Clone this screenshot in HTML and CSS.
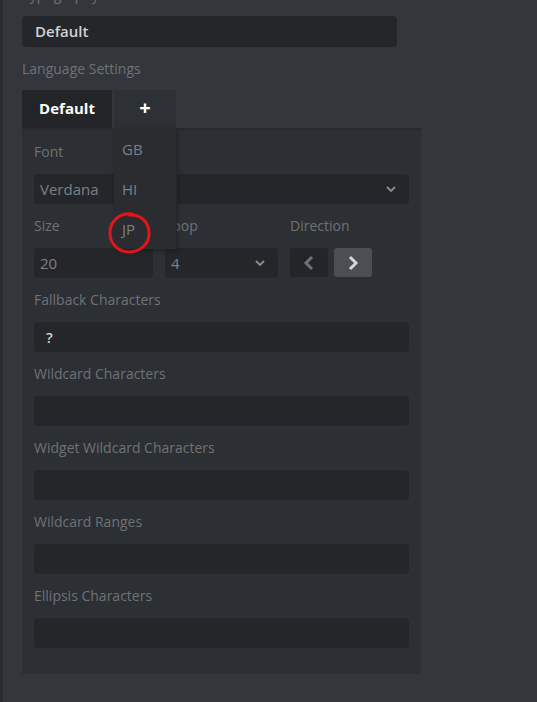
FILE: index.html
```html
<!DOCTYPE html>
<html lang="en">
<head>
  <meta charset="UTF-8" />
  <title>Language Settings</title>
  <link rel="stylesheet" href="styles.css">
</head>
<body>
  <div class="page">
    <div class="label top-label">Typography</div>
    <div class="input strong">Default</div>

    <div class="label section-label">Language Settings</div>

    <div class="tabs">
      <div class="tab active">Default</div>
      <div class="tab add">+
        <div class="menu">
          <div class="menu-item">GB</div>
          <div class="menu-item">HI</div>
          <div class="menu-item">JP</div>
        </div>
        <svg class="mark" width="50" height="46" viewBox="0 0 50 46">
          <path d="M27 4 C16 2 6 10 5 21 C4 33 13 42 24 42 C35 42 45 34 44 22 C43 11 35 4 24 5" fill="none" stroke="#e0161b" stroke-width="3" stroke-linecap="round"/>
        </svg>
      </div>
    </div>

    <div class="panel">
      <div class="field">
        <div class="label">Font</div>
        <div class="input select">Verdana
          <svg class="chev" width="10" height="6" viewBox="0 0 10 6"><path d="M1 1 L5 5 L9 1" fill="none" stroke="#8a8f94" stroke-width="1.8"/></svg>
        </div>
      </div>

      <div class="row">
        <div class="field">
          <div class="label">Size</div>
          <div class="input">20</div>
        </div>
        <div class="field">
          <div class="label">Loop</div>
          <div class="input select">4
            <svg class="chev" width="10" height="6" viewBox="0 0 10 6"><path d="M1 1 L5 5 L9 1" fill="none" stroke="#8a8f94" stroke-width="1.8"/></svg>
          </div>
        </div>
        <div class="field">
          <div class="label">Direction</div>
          <div class="dir">
            <div class="dir-btn">
              <svg width="12" height="16" viewBox="0 0 12 16"><path d="M9 2 L3 8 L9 14" fill="none" stroke="#6d7176" stroke-width="3"/></svg>
            </div>
            <div class="dir-btn on">
              <svg width="12" height="16" viewBox="0 0 12 16"><path d="M3 2 L9 8 L3 14" fill="none" stroke="#d4d7da" stroke-width="3"/></svg>
            </div>
          </div>
        </div>
      </div>

      <div class="field">
        <div class="label">Fallback Characters</div>
        <div class="input value">?</div>
      </div>
      <div class="field">
        <div class="label">Wildcard Characters</div>
        <div class="input"></div>
      </div>
      <div class="field">
        <div class="label">Widget Wildcard Characters</div>
        <div class="input"></div>
      </div>
      <div class="field">
        <div class="label">Wildcard Ranges</div>
        <div class="input"></div>
      </div>
      <div class="field">
        <div class="label">Ellipsis Characters</div>
        <div class="input"></div>
      </div>
    </div>
  </div>
</body>
</html>
```

FILE: styles.css
```css
body {
  margin: 0;
  font-family: 'Open Sans', 'Noto Sans', sans-serif;
  font-size: 14px;
  background-color: #33363a;
  border-left: 3px solid #2a2c30;
  height: 702px;
  overflow: hidden;
}
.page {
  padding: 0 19px;
}
.label {
  color: #6e7378;
  line-height: 20px;
  height: 20px;
}
.top-label {
  margin-top: -15px;
  margin-bottom: 11px;
}
.section-label {
  margin-top: 12px;
  margin-bottom: 11px;
}
.input {
  position: relative;
  box-sizing: border-box;
  height: 30px;
  line-height: 30px;
  padding: 0 6px;
  background: #242629;
  border-radius: 4px;
  color: #7c8186;
  font-size: 15px;
}
.input.strong {
  width: 375px;
  height: 31px;
  line-height: 31px;
  padding: 0 13px;
  color: #cfd2d6;
  font-weight: 600;
}
.input.value {
  color: #cfd2d6;
  font-weight: 600;
  padding: 0 12px;
}
.select .chev {
  position: absolute;
  right: 13px;
  top: 12px;
}
.tabs {
  display: flex;
  gap: 2px;
  height: 38px;
}
.tab {
  width: 90px;
  text-align: center;
  line-height: 36px;
  color: #ffffff;
  font-weight: 700;
  font-size: 15px;
}
.tab.active {
  background: #222427;
}
.tab.add {
  position: relative;
  width: 62px;
  background: #2d3034;
  font-size: 20px;
}
.menu {
  position: absolute;
  top: 38px;
  left: 0;
  width: 62px;
  padding-top: 1px;
  background: #2a2c30;
  border-right: 1px solid #25272a;
  box-shadow: 1px 2px 4px rgba(0, 0, 0, 0.25);
  z-index: 2;
}
.menu-item {
  height: 40px;
  line-height: 40px;
  padding-left: 8px;
  text-align: left;
  color: #7b8085;
  font-weight: 400;
  font-size: 15px;
}
.mark {
  position: absolute;
  top: 120px;
  left: -9px;
  z-index: 3;
}
.panel {
  width: 399px;
  box-sizing: border-box;
  padding: 12px 12px 14px;
  background: #2c2f33;
  border-top: 2px solid #282a2e;
}
.field {
  margin-bottom: 12px;
}
.field .label {
  margin-bottom: 12px;
}
.row {
  display: grid;
  grid-template-columns: 119px 113px 1fr;
  gap: 12px;
}
.dir {
  display: flex;
  gap: 6px;
}
.dir-btn {
  width: 38px;
  height: 29px;
  border-radius: 3px;
  background: #232528;
  display: flex;
  align-items: center;
  justify-content: center;
}
.dir-btn.on {
  background: #4b4f54;
}
```
